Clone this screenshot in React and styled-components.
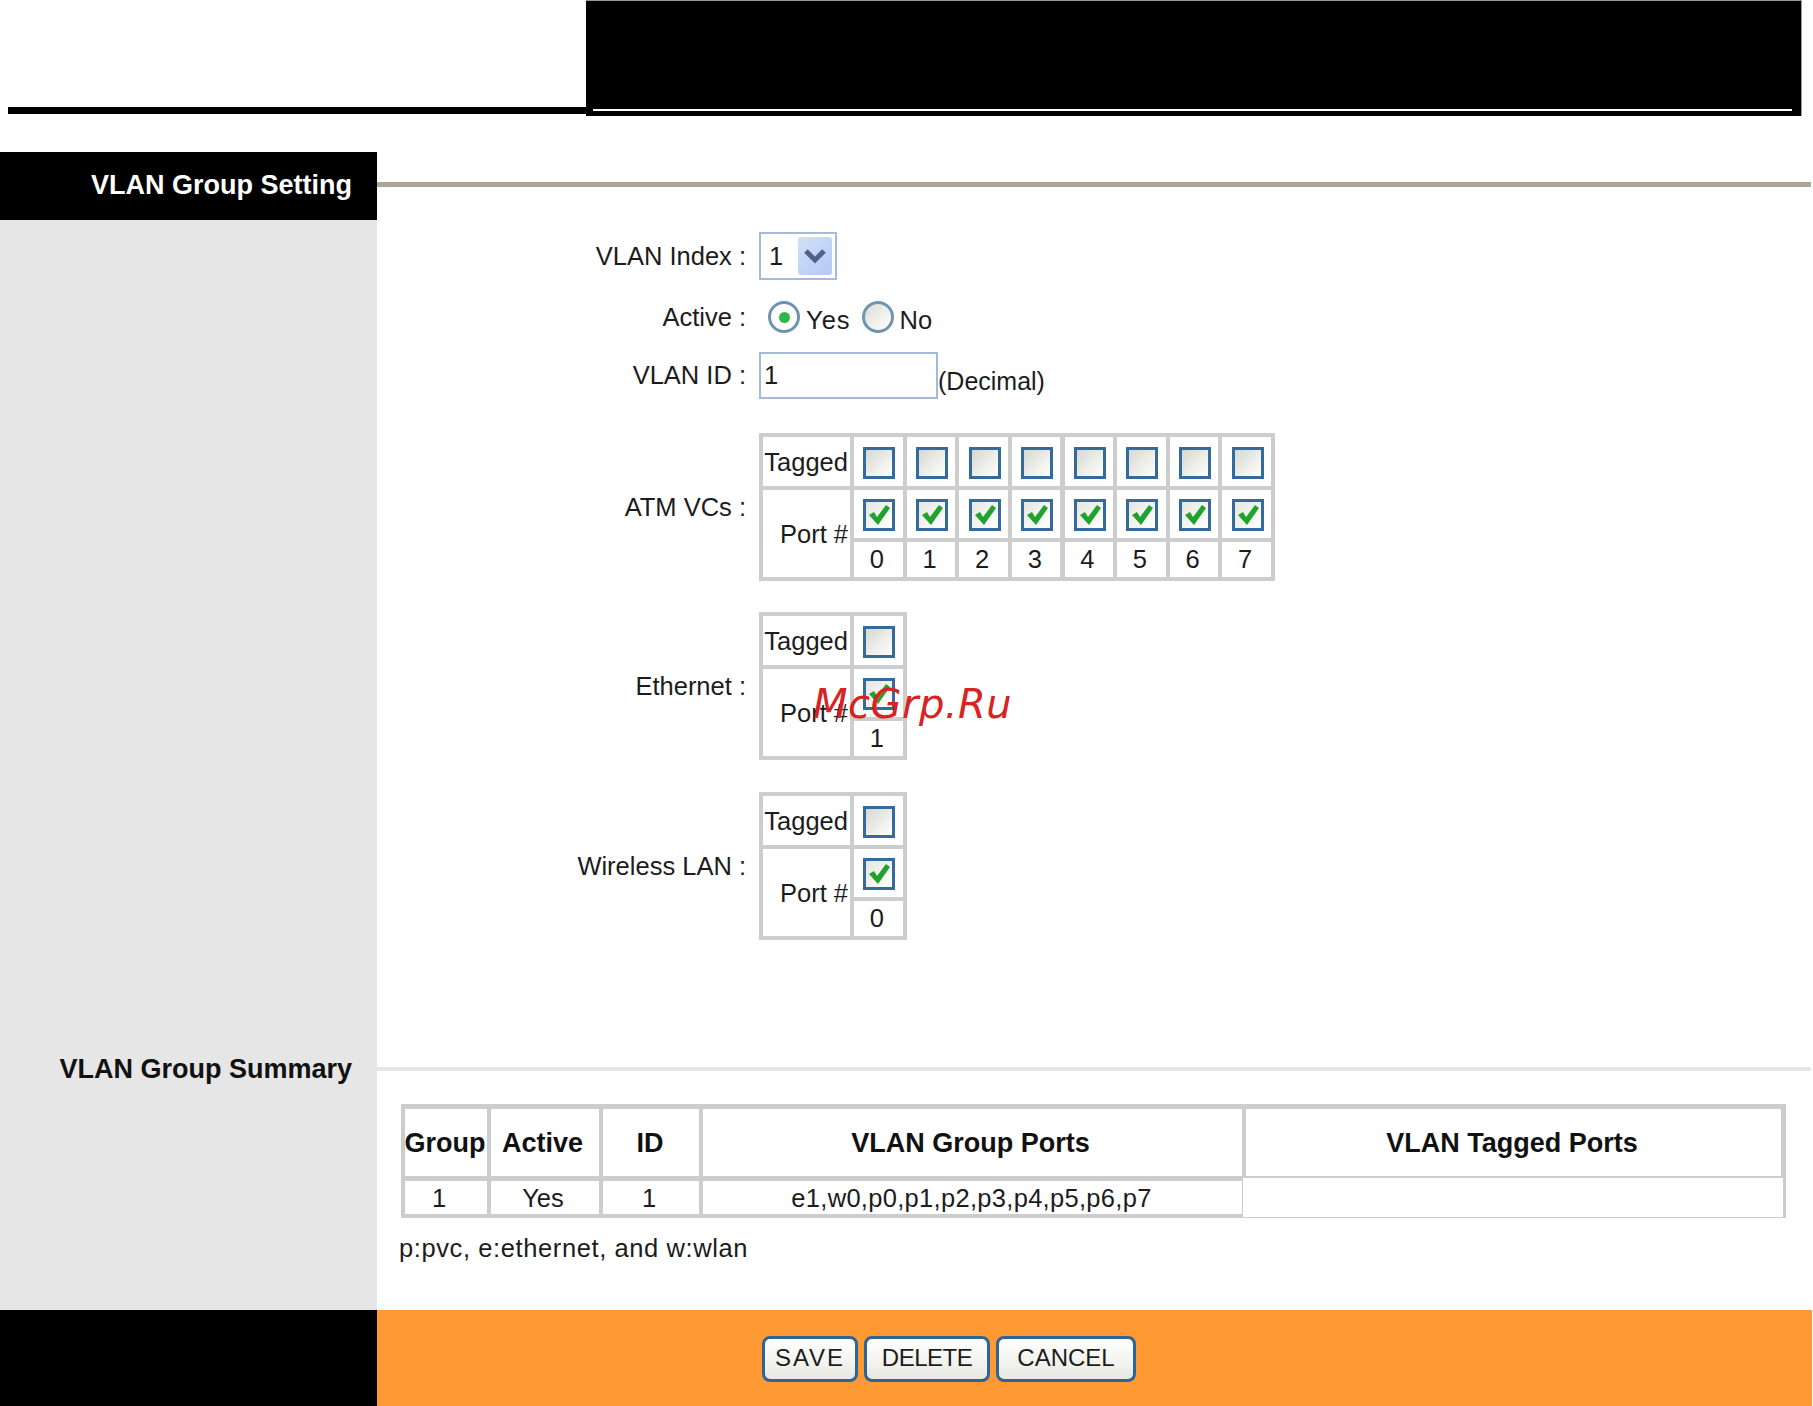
import React from 'react';
import styled, { createGlobalStyle } from 'styled-components';

const GlobalStyle = createGlobalStyle`
  html, body {
    margin: 0;
    padding: 0;
    background: #fff;
  }
  body {
    font-family: "Liberation Sans", Arial, sans-serif;
    font-size: 25.5px;
    color: #1c1c1c;
  }
`;

const Page = styled.div`
  position: relative;
  width: 1812px;
  height: 1406px;
  overflow: hidden;
`;

const TopBand = styled.div`
  display: flex;
  height: 116px;
  margin-bottom: 36px;
`;

const TopLeft = styled.div`
  flex: 0 0 578px;
  margin-left: 8px;
  height: 7px;
  margin-top: 107px;
  background: #000;
`;

const BlackBlock = styled.div`
  flex: 0 0 1216px;
  box-sizing: border-box;
  display: flex;
  align-items: flex-end;
  padding: 0 9px 5px 7px;
  background: #000;
  border-top: 1px solid #999;
  border-right: 1px solid #999;
`;

const WhiteLine = styled.div`
  flex: 1;
  height: 2px;
  background: #fff;
`;

const Layout = styled.div`
  display: grid;
  grid-template-columns: 377px 1fr;
  grid-template-rows: 68px 830px 38px 222px 96px;
`;

const TitleBlack = styled.div`
  display: flex;
  align-items: center;
  justify-content: flex-end;
  padding: 0 25px 2px 0;
  background: #000;
  color: #fff;
  font-size: 27px;
  font-weight: bold;
`;

const RuleCell = styled.div`
  display: flex;
  align-items: center;
  padding: 0 1px ${(p) => p.$lift || 0}px 0;
`;

const Rule = styled.div`
  flex: 1;
  height: ${(p) => p.$h}px;
  background: ${(p) => p.$color};
`;

const SideFill = styled.div`
  background: #e6e6e6;
`;

const SideTitle = styled(SideFill)`
  display: flex;
  align-items: center;
  justify-content: flex-end;
  padding-right: 25px;
  color: #111;
  font-size: 27px;
  font-weight: bold;
`;

const FormArea = styled.div`
  display: flex;
  flex-direction: column;
  padding-top: 12px;
`;

const FormRow = styled.div`
  display: grid;
  grid-template-columns: 369px 1fr;
  column-gap: 13px;
  align-items: center;
  margin-top: ${(p) => p.$top || 0}px;
  height: ${(p) => (p.$h ? `${p.$h}px` : 'auto')};
`;

const Label = styled.div`
  text-align: right;
`;

const Controls = styled.div`
  display: flex;
  align-items: center;
`;

const SelectBox = styled.div`
  box-sizing: border-box;
  width: 78px;
  height: 48px;
  display: flex;
  align-items: center;
  justify-content: space-between;
  padding: 0 3px 0 8px;
  border: 2px solid #a3bbd8;
  background: #fff;
`;

const SelectArrow = styled.div`
  width: 34px;
  height: 38px;
  display: flex;
  align-items: center;
  justify-content: center;
  border-radius: 3px;
  background: linear-gradient(135deg, #d3e0f7, #b2c9f5);
`;

const RadioGroup = styled(Controls)`
  padding-left: 9px;
`;

const RadioCircle = styled.span`
  box-sizing: border-box;
  width: 32px;
  height: 32px;
  display: flex;
  align-items: center;
  justify-content: center;
  border: 3px solid #6f93b3;
  border-radius: 50%;
  background: ${(p) => (p.$on ? '#fff' : 'linear-gradient(135deg, #dcdcd5, #fff)')};
`;

const RadioDot = styled.span`
  width: 11px;
  height: 11px;
  border-radius: 50%;
  background: #2fb84a;
`;

const RadioText = styled.span`
  margin: 6px ${(p) => p.$after || 0}px 0 6px;
  letter-spacing: ${(p) => p.$track || 0}px;
`;

const TextInput = styled.input`
  box-sizing: border-box;
  width: 179px;
  height: 47px;
  padding: 0 0 1px 3px;
  border: 2px solid #a3bbd8;
  background: #fff;
  color: #1c1c1c;
  font: inherit;
  outline: none;
`;

const Hint = styled.span`
  margin-top: 12px;
  font-size: 25px;
`;

const PortGrid = styled.div`
  display: inline-grid;
  grid-template-columns: 87px repeat(${(p) => p.$count}, 48.3px);
  grid-template-rows: 49px 48px 35px;
  column-gap: 4.3px;
  row-gap: 4px;
  padding: 4px;
  background: #cdcdcd;
`;

const Cell = styled.div`
  display: flex;
  align-items: center;
  justify-content: center;
  background: #fff;
`;

const HeadCell = styled(Cell)`
  justify-content: flex-end;
  padding: 1px 2px 0 0;
  grid-row: ${(p) => (p.$tall ? 'span 2' : 'auto')};
`;

const BoxCell = styled(Cell)`
  padding: 2px 0 0 2px;
`;

const DigitCell = styled(Cell)`
  padding-right: 3px;
`;

const CheckBox = styled.span`
  box-sizing: border-box;
  width: 32px;
  height: 32px;
  display: flex;
  align-items: center;
  justify-content: center;
  border: 3px solid #356a9c;
  background: ${(p) =>
    p.$on
      ? 'linear-gradient(135deg, #e6e6e0, #fff)'
      : 'linear-gradient(135deg, #d8d8d0, #fff)'};
`;

const SummaryArea = styled.div`
  padding: 16px 0 0 24px;
`;

const SummaryGrid = styled.div`
  display: grid;
  width: 1385px;
  box-sizing: border-box;
  grid-template-columns: 82px 108px 96px 539px 535px;
  grid-template-rows: 67px 33px;
  column-gap: 4px;
  row-gap: 5px;
  padding: 5px 5px 4px 4px;
  background: #cdcdcd;
`;

const SummaryHead = styled(Cell)`
  padding: 1px ${(p) => p.$pr || 0}px 0 0;
  font-size: 27px;
  font-weight: bold;
  color: #111;
`;

const SummaryValue = styled(Cell)`
  padding: 1px ${(p) => p.$pr || 0}px 0 0;
  letter-spacing: ${(p) => p.$track || 0}px;
`;

const EmptyValue = styled(Cell)`
  margin: -3px -2px -3px -3px;
`;

const Note = styled.div`
  margin: 16px 0 0 -2px;
  letter-spacing: 0.6px;
`;

const FooterLeft = styled.div`
  background: #000;
`;

const FooterBar = styled.div`
  display: flex;
  align-items: flex-start;
  gap: 6px;
  padding: 26px 0 0 385px;
  background: #ff9933;
`;

const Button = styled.button`
  box-sizing: border-box;
  width: ${(p) => p.$w}px;
  height: 46px;
  padding: 0 0 2px;
  border: 3px solid #2e6496;
  border-radius: 8px;
  background: linear-gradient(180deg, #ffffff, #e9e9e2);
  color: #1c1c1c;
  font: inherit;
  font-size: 24px;
  letter-spacing: ${(p) => p.$track || 0}px;
`;

const Watermark = styled.div`
  position: absolute;
  left: 813px;
  top: 680px;
  color: #d92222;
  font-family: "DejaVu Sans", sans-serif;
  font-style: italic;
  font-size: 40px;
  letter-spacing: 0.5px;
  line-height: 48px;
  pointer-events: none;
`;

const Chevron = () => (
  <svg width="26" height="20" viewBox="0 0 26 20">
    <polyline points="4,5 13,14 22,5" fill="none" stroke="#4f6388" strokeWidth="5" />
  </svg>
);

const Tick = () => (
  <svg width="24" height="24" viewBox="0 0 24 24">
    <path d="M2 12l5-3 3 5L19 2l4 3-12 17z" fill="#1fa32c" />
  </svg>
);

const Ports = ({ ports }) => (
  <PortGrid $count={ports.length}>
    <HeadCell>Tagged</HeadCell>
    {ports.map((p) => (
      <BoxCell key={p}>
        <CheckBox />
      </BoxCell>
    ))}
    <HeadCell $tall>Port #</HeadCell>
    {ports.map((p) => (
      <BoxCell key={p}>
        <CheckBox $on>
          <Tick />
        </CheckBox>
      </BoxCell>
    ))}
    {ports.map((p) => (
      <DigitCell key={p}>{p}</DigitCell>
    ))}
  </PortGrid>
);

const App = () => (
  <Page>
    <GlobalStyle />
    <TopBand>
      <TopLeft />
      <BlackBlock>
        <WhiteLine />
      </BlackBlock>
    </TopBand>

    <Layout>
      <TitleBlack>VLAN Group Setting</TitleBlack>
      <RuleCell $lift={4}>
        <Rule $h={5} $color="#aaa796" />
      </RuleCell>

      <SideFill />
      <FormArea>
        <FormRow>
          <Label>VLAN Index :</Label>
          <Controls>
            <SelectBox>
              1
              <SelectArrow>
                <Chevron />
              </SelectArrow>
            </SelectBox>
          </Controls>
        </FormRow>
        <FormRow $top={18} $h={38}>
          <Label>Active :</Label>
          <RadioGroup>
            <RadioCircle $on>
              <RadioDot />
            </RadioCircle>
            <RadioText $after={11} $track={1}>Yes</RadioText>
            <RadioCircle />
            <RadioText>No</RadioText>
          </RadioGroup>
        </FormRow>
        <FormRow $top={16}>
          <Label>VLAN ID :</Label>
          <Controls>
            <TextInput readOnly defaultValue="1" />
            <Hint>(Decimal)</Hint>
          </Controls>
        </FormRow>
        <FormRow $top={34}>
          <Label>ATM VCs :</Label>
          <Controls>
            <Ports ports={[0, 1, 2, 3, 4, 5, 6, 7]} />
          </Controls>
        </FormRow>
        <FormRow $top={31}>
          <Label>Ethernet :</Label>
          <Controls>
            <Ports ports={[1]} />
          </Controls>
        </FormRow>
        <FormRow $top={32}>
          <Label>Wireless LAN :</Label>
          <Controls>
            <Ports ports={[0]} />
          </Controls>
        </FormRow>
      </FormArea>

      <SideTitle>VLAN Group Summary</SideTitle>
      <RuleCell>
        <Rule $h={4} $color="#e6e6e6" />
      </RuleCell>

      <SideFill />
      <SummaryArea>
        <SummaryGrid>
          <SummaryHead $pr={2}>Group</SummaryHead>
          <SummaryHead $pr={5}>Active</SummaryHead>
          <SummaryHead $pr={2}>ID</SummaryHead>
          <SummaryHead $pr={4}>VLAN Group Ports</SummaryHead>
          <SummaryHead $pr={3}>VLAN Tagged Ports</SummaryHead>
          <SummaryValue $pr={14}>1</SummaryValue>
          <SummaryValue $pr={4}>Yes</SummaryValue>
          <SummaryValue $pr={4}>1</SummaryValue>
          <SummaryValue $pr={2} $track={0.3}>e1,w0,p0,p1,p2,p3,p4,p5,p6,p7</SummaryValue>
          <EmptyValue />
        </SummaryGrid>
        <Note>p:pvc, e:ethernet, and w:wlan</Note>
      </SummaryArea>

      <FooterLeft />
      <FooterBar>
        <Button $w={96} $track={2}>SAVE</Button>
        <Button $w={126} $track={-0.5}>DELETE</Button>
        <Button $w={140}>CANCEL</Button>
      </FooterBar>
    </Layout>

    <Watermark>McGrp.Ru</Watermark>
  </Page>
);

export default App;
